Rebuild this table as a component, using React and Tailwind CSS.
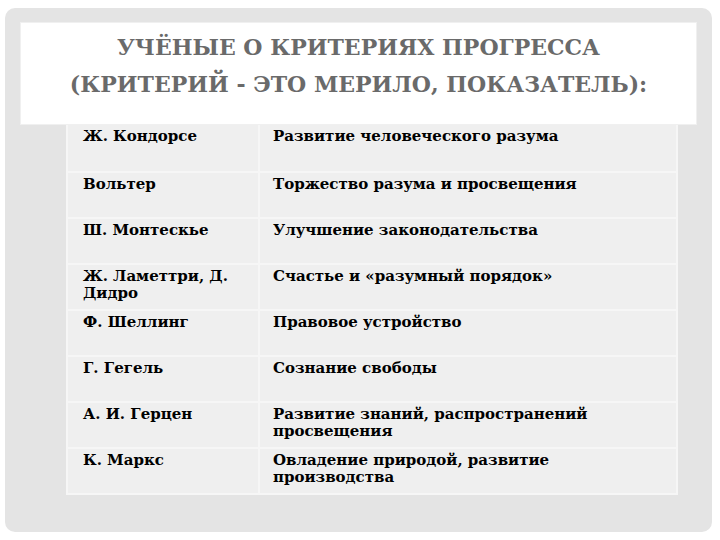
import React from 'react';

const rows = [
  ['Ж. Кондорсе', 'Развитие человеческого разума'],
  ['Вольтер', 'Торжество разума и просвещения'],
  ['Ш. Монтескье', 'Улучшение законодательства'],
  ['Ж. Ламеттри, Д. Дидро', 'Счастье и «разумный порядок»'],
  ['Ф. Шеллинг', 'Правовое устройство'],
  ['Г. Гегель', 'Сознание свободы'],
  ['А. И. Герцен', 'Развитие знаний, распространений просвещения'],
  ['К. Маркс', 'Овладение природой, развитие производства'],
];

export default function App() {
  return (
    <div className="w-[720px] h-[540px] bg-white p-[5px] pt-[8px] pb-[8px] font-['DejaVu_Serif']">
      <div className="h-full w-[707px] rounded-[10px] bg-[#e4e4e4] pt-[14px] flex flex-col">
        <div className="mx-[15px] h-[103px] bg-white border border-[#f0f0f0] flex flex-col items-center pt-[6px]">
          <h1 className="text-[22px] leading-[37px] font-bold text-[#6a6a6a] text-center font-['DejaVu_Serif']">
            УЧЁНЫЕ О КРИТЕРИЯХ ПРОГРЕССА
            <br />
            (КРИТЕРИЙ - ЭТО МЕРИЛО, ПОКАЗАТЕЛЬ):
          </h1>
        </div>
        <div className="ml-[61px] w-[612px] bg-[#efefef] border-x-2 border-b-2 border-[#f6f6f6] grid grid-cols-[192px_1fr]">
          {rows.map(([a, b], i) => (
            <React.Fragment key={i}>
              <div
                className={`h-[46px] pl-[15px] pr-2 pt-[3px] text-[15px] leading-[17px] font-bold text-black border-r-2 border-[#f6f6f6] ${i > 0 ? 'border-t-2' : ''}`}
              >
                {a}
              </div>
              <div
                className={`h-[46px] pl-[13px] pr-[60px] pt-[3px] text-[15px] leading-[17px] font-bold text-black border-[#f6f6f6] ${i > 0 ? 'border-t-2' : ''}`}
              >
                {b}
              </div>
            </React.Fragment>
          ))}
        </div>
      </div>
    </div>
  );
}
